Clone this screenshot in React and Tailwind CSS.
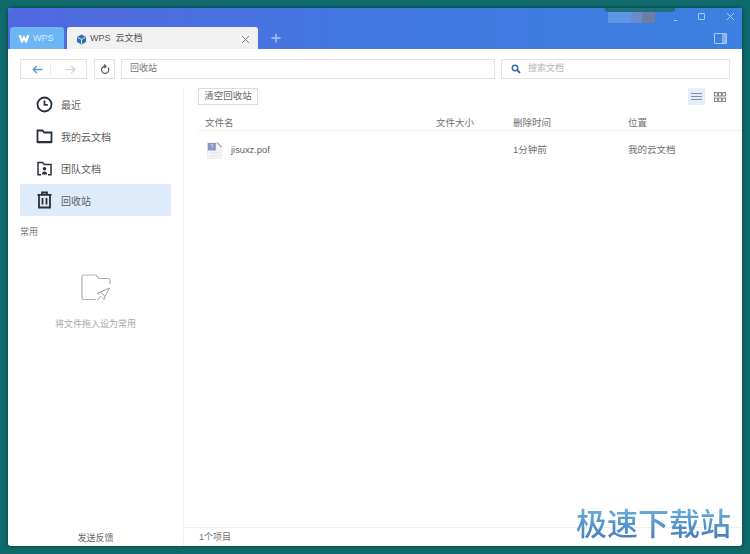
const font = { fontFamily: '"Liberation Sans","Noto Sans CJK SC",sans-serif' };

function SideItem({ icon, label, active }) {
  return (
    <div className={`flex items-center h-8 pl-[16px] ${active ? "bg-[#deebfb]" : ""}`}>
      <div className="w-[17px] h-[17px] flex items-center justify-center">{icon}</div>
      <span className="ml-[8px] pt-[2px] text-[10px] text-[#5c5c5c]">{label}</span>
    </div>
  );
}

const s = { fill: "none", stroke: "#2b2f36", strokeWidth: 1.8 };

export default function App() {
  return (
    <div className="relative w-[750px] h-[554px] p-2 bg-[#0f6a6c] overflow-hidden" style={font}>
      <div className="w-full h-full flex flex-col bg-white rounded-[3px] overflow-hidden shadow-[0_0_4px_rgba(0,40,40,0.7)]">
        {/* Title bar */}
        <div className="h-[41px] shrink-0 flex items-end relative bg-gradient-to-r from-[#5168e0] via-[#4178e0] to-[#3b80e0]">
          <div className="ml-[2px] w-[54px] h-[22px] flex items-center gap-[3px] pl-[8px] pt-px bg-[#6cb6f6] rounded-t-[3px] text-[9px] text-[#d7ecff]">
            <svg width="12" height="9" viewBox="0 0 12 9"><path d="M0.500 1h2.600l1.200 4 1.700-4 1.700 4 1.200-4h2.600L9 8.500H7.200L6 5.600 4.800 8.500H3z" fill="#fff" /></svg>
            <span>WPS</span>
          </div>
          <div className="ml-[3px] w-[191px] h-[22px] flex items-center pl-[9px] pr-[8px] pt-[2px] bg-[#f1f1f1] rounded-t-[3px] text-[9px] text-[#555]">
            <svg width="11" height="11" viewBox="0 0 11 11"><path d="M5.500.5 10 3v5l-4.500 2.500L1 8V3z" fill="#2f6fb5" /><path d="M1.500 3.200 5.500 5.500 9.500 3.200" fill="none" stroke="#fff" strokeWidth=".8" /><path d="M5.500 5.500v4.500" stroke="#fff" strokeWidth=".8" /></svg>
            <span className="ml-[3px]">WPS&nbsp;&nbsp;云文档</span>
            <svg className="ml-auto" width="9" height="9" viewBox="0 0 9 9"><path d="M1 1l7 7M8 1 1 8" stroke="#777" strokeWidth=".9" /></svg>
          </div>
          <svg className="ml-[13px] mb-[6px]" width="10" height="10" viewBox="0 0 10 10"><path d="M5 .5v9M.5 5h9" stroke="#a9c8f4" strokeWidth="1.300" /></svg>
          {/* Window controls */}
          <div className="absolute right-0 top-0 h-full w-[140px]">
            <div className="absolute left-[3px] top-0 w-[70px] h-[4px] bg-[#1f6f7e] rounded-b-[3px]" />
            <div className="absolute left-[6px] top-[4px] flex h-[11px]">
              <div className="w-[23px] bg-[#5f96e4]" />
              <div className="w-[11px] bg-[#6b8cc6]" />
              <div className="w-[13px] bg-[#6b7ea6]" />
            </div>
            <div className="absolute left-[72px] top-[12px] w-[3px] h-[1px] bg-[#a9c8f4]" />
            <div className="absolute left-[96px] top-[5px] w-[7px] h-[7px] border border-[#a9c8f4] rounded-[1px]" />
            <svg className="absolute left-[124px] top-[4px]" width="9" height="9" viewBox="0 0 9 9"><path d="M1 1l7 7M8 1 1 8" stroke="#a9c8f4" strokeWidth="1" /></svg>
            <div className="absolute left-[112px] top-[25px] w-[13px] h-[11px] border border-[#a9c8f4] rounded-[1px] flex justify-end">
              <div className="w-[4px] h-full bg-[#86b0ec]" />
            </div>
          </div>
        </div>

        {/* Toolbar */}
        <div className="h-[38px] shrink-0 flex items-center pl-[12px] pr-[12px] pt-[2px]">
          <div className="w-[67px] h-5 border border-[#e3e3e3] flex items-center">
            <svg className="ml-[11px]" width="11" height="9" viewBox="0 0 11 9"><path d="M10.500 4.500H1.200M4.800 1 1.200 4.500 4.800 8" fill="none" stroke="#5b93c9" strokeWidth="1.300" /></svg>
            <div className="ml-[7px] w-px h-[9px] bg-[#e8e8e8]" />
            <svg className="ml-[14px]" width="11" height="9" viewBox="0 0 11 9"><path d="M.5 4.500h9.300M6.200 1l3.600 3.500L6.200 8" fill="none" stroke="#cfd3d6" strokeWidth="1.200" /></svg>
          </div>
          <div className="ml-[7px] w-[21px] h-5 border border-[#e3e3e3] flex items-center justify-center">
            <svg width="10" height="11" viewBox="0 0 10 11"><path d="M7.800 3.300A3.600 3.600 0 1 1 3.500 2.600L5.500 2.200" fill="none" stroke="#555" strokeWidth="1.200" /><path d="M4 .5 6 2.200 4.200 4" fill="none" stroke="#555" strokeWidth="1.100" /></svg>
          </div>
          <div className="ml-[6px] w-[374px] h-5 border border-[#e3e3e3] flex items-center pl-[8px] text-[9px] text-[#777]">回收站</div>
          <div className="ml-[6px] w-[229px] h-5 border border-[#e3e3e3] flex items-center pl-[9px] text-[9px] text-[#b5b5b5]">
            <svg width="10" height="10" viewBox="0 0 10 10"><circle cx="4" cy="4" r="2.700" fill="none" stroke="#2f6bb0" strokeWidth="1.500" /><path d="M6 6l3 3" stroke="#2f6bb0" strokeWidth="1.800" /></svg>
            <span className="ml-[7px]">搜索文档</span>
          </div>
        </div>

        {/* Body */}
        <div className="flex-1 flex min-h-0">
          {/* Sidebar */}
          <aside className="w-[176px] shrink-0 border-r border-[#f0f0f0] flex flex-col">
            <div className="pl-[12px] pr-[12px] pt-px">
              <SideItem label="最近" icon={<svg width="17" height="17" viewBox="0 0 17 17"><circle cx="8.500" cy="8.500" r="7" {...s} /><path d="M8.500 4.500v4.300h3.300" {...s} /></svg>} />
              <SideItem label="我的云文档" icon={<svg width="17" height="17" viewBox="0 0 17 17"><path d="M1.500 14V2.500h5l1.800 2h7.200V14z" {...s} /><path d="M1.500 14.200h14" stroke="#2b2f36" strokeWidth="2" /></svg>} />
              <SideItem label="团队文档" icon={<svg width="17" height="17" viewBox="0 0 17 17"><path d="M5 14.800H2V2.500h4.500l1.800 2H15v10.300h-3" fill="none" stroke="#2b2f36" strokeWidth="1.500" /><circle cx="8.500" cy="8.800" r="1.800" fill="#2b2f36" /><path d="M5.800 14.500c0-4 5.400-4 5.400 0z" fill="#2b2f36" /></svg>} />
              <SideItem active label="回收站" icon={<svg width="17" height="18" viewBox="0 0 17 18"><path d="M1.500 3.800h14M6 3.500V1.500h5v2" {...s} /><path d="M3 4v12.500h11V4" {...s} /><path d="M6.500 7v6.500M10.500 7v6.500" {...s} /></svg>} />
            </div>
            <div className="pl-[12px] mt-[10px] text-[9px] leading-[12px] text-[#777]">常用</div>
            <div className="flex flex-col items-center mt-[36px]">
              <svg width="30" height="27" viewBox="0 0 30 27">
                <path d="M15 25.500H2.500a1.500 1.500 0 0 1-1.500-1.500V2.500A1.500 1.500 0 0 1 2.500 1h12.500l3 3.500H27.500a1.500 1.500 0 0 1 1.500 1.500V10" fill="none" stroke="#aeb0b3" strokeWidth="1.200" />
                <path d="M28.500 14 19.500 18 24 22.500zM19.500 18l-3 1 2 2M24 22.500l-1 3-2-2M20 22l-3.500 4" fill="none" stroke="#9a9c9f" strokeWidth="1" strokeLinejoin="round" />
              </svg>
              <div className="mt-[17px] text-[9px] leading-[12px] text-[#a8a8a8]">将文件拖入设为常用</div>
            </div>
            <div className="mt-auto h-[18px] flex items-center justify-center pt-[3px] text-[9px] text-[#666]">发送反馈</div>
          </aside>

          {/* Main */}
          <main className="flex-1 min-w-0 flex flex-col">
            <div className="flex-1 min-h-0 flex flex-col">
              <div className="flex items-center justify-between h-[17px] mt-px pl-[14px] pr-[16px] shrink-0">
                <div className="w-[60px] h-[17px] border border-[#dcdcdc] flex items-center justify-center text-[9.500px] text-[#666]">清空回收站</div>
                <div className="flex items-center gap-[9px]">
                  <div className="w-[17px] h-[17px] bg-[#e4edf8] flex flex-col items-center justify-center gap-[2px]">
                    <div className="w-[11px] h-px bg-[#7f929e]" />
                    <div className="w-[11px] h-px bg-[#7f929e]" />
                    <div className="w-[11px] h-px bg-[#7f929e]" />
                  </div>
                  <svg width="12" height="10" viewBox="0 0 12 10" fill="none" stroke="#777" strokeWidth=".9">
                    <rect x=".5" y=".5" width="2.800" height="3.500" /><rect x="4.600" y=".5" width="2.800" height="3.500" /><rect x="8.700" y=".5" width="2.800" height="3.500" />
                    <rect x=".5" y="6" width="2.800" height="3.500" /><rect x="4.600" y="6" width="2.800" height="3.500" /><rect x="8.700" y="6" width="2.800" height="3.500" />
                  </svg>
                </div>
              </div>
              <div className="mt-[9px] ml-[14px] h-[17px] pt-[2px] border-b border-[#f0f0f0] flex items-center text-[9.500px] text-[#707070] shrink-0">
                <div className="pl-[7px] w-[238px]">文件名</div>
                <div className="w-[77px]">文件大小</div>
                <div className="w-[115px]">删除时间</div>
                <div>位置</div>
              </div>
              <div className="ml-[14px] h-[38px] flex items-center text-[9.500px] text-[#707070] shrink-0">
                <div className="pl-[9px] w-[238px] flex items-center">
                  <svg width="15" height="17" viewBox="0 0 15 17">
                    <path d="M.5.500h9.500l4.500 4.500v11.500H.5z" fill="#f2f3f5" stroke="#e2e4e7" strokeWidth=".6" />
                    <rect x=".8" y="1" width="8" height="7.500" fill="#8a94c8" />
                    <path d="M3.500 3.500a1.200 1.200 0 1 1 1.600 1.300v1" fill="none" stroke="#eef" strokeWidth=".7" />
                    <path d="M10 .5l4.500 4.500" stroke="#666" strokeWidth=".9" />
                    <path d="M3 11h9M3 14h9" stroke="#dcdee1" strokeWidth=".8" />
                  </svg>
                  <span className="ml-[9px] pt-px text-[9.300px] text-[#606060]">jisuxz.pof</span>
                </div>
                <div className="w-[77px]" />
                <div className="w-[115px] pt-px">1分钟前</div>
                <div className="pt-px">我的云文档</div>
              </div>
            </div>
            <div className="h-[19px] shrink-0 border-t border-[#f0f0f0] flex items-center pl-[15px] pt-[2px] text-[9px] text-[#707070]">1个项目</div>
          </main>
        </div>
      </div>

      {/* Watermark */}
      <div className="absolute left-[576px] top-[504px] text-[31px] leading-[42px] font-medium whitespace-nowrap text-transparent bg-clip-text bg-gradient-to-b from-[#6cb2e0] to-[#3f74b5]">极速下载站</div>
    </div>
  );
}
